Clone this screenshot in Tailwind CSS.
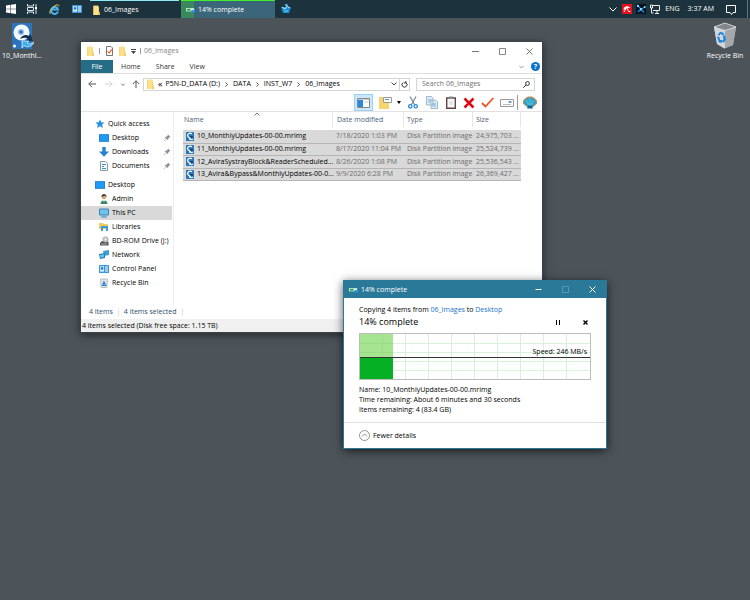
<!DOCTYPE html>
<html lang="en">
<head>
  <meta charset="UTF-8" />
  <meta name="viewport" content="width=device-width, initial-scale=1.0" />
  <title>Desktop</title>
  <script src="https://cdn.jsdelivr.net/npm/@tailwindcss/browser@4"></script>
</head>
<body class="relative min-h-screen overflow-hidden bg-[#4c545a] font-['Open_Sans','Noto_Sans',sans-serif] text-[7px] leading-[10px] text-black">

  <!-- Shared icons -->
  <svg class="hidden">
    <symbol id="folder" viewBox="0 0 10 12">
      <path d="M1 1h6l1 2v9H1z" fill="#f5d068" /><path d="M2 1h5v9l2 1v1H2z" fill="#ffe08a" /><path d="M7 8h2v4H7z" fill="#f3ca5c" />
    </symbol>
    <symbol id="disk" viewBox="0 0 8 9">
      <rect width="8" height="9" rx=".5" fill="#2b77b9" /><path d="M6 1.800C3.500.3 1.500 2 1.700 3.800 1.900 5.500 3.500 6 4.500 5.600" fill="none" stroke="#fff" stroke-width="1.300" />
      <path d="M3.500 5.200C5 3.500 6.500 4 7.500 5.200L6 6z" fill="#173e66" /><path d="M7.500 7C6.500 8.800 4.500 8.600 3.700 7.500L3 8.300V5.900h2.500l-.8.800c.8.600 1.500.4 2-.2z" fill="#dff3ff" />
    </symbol>
    <symbol id="monitor" viewBox="0 0 12 9">
      <rect x=".5" y=".5" width="11" height="8" fill="#1e9bf5" stroke="#1878c8" />
    </symbol>
    <symbol id="pin" viewBox="0 0 8 8">
      <path d="M5 .5 7.500 3l-1 .3-1.300 1.400-.2 1.600-1.500-1.500L1 7.300l-.3-.3 2.300-2.600L1.600 3l1.700-.2L4.700 1.500z" fill="#8b9299" />
    </symbol>
    <symbol id="panel" viewBox="0 0 10 8">
      <rect width="10" height="8" rx=".5" fill="#3b94d8" /><rect x="1" y="1.200" width="4" height="5.500" fill="#cdeafc" /><circle cx="3" cy="3.400" r="1.300" fill="#2b7fc5" /><path d="M6 2h3M6 4h3M6 6h3" stroke="#fff" />
    </symbol>
    <symbol id="bin" viewBox="0 0 24 27">
      <path d="M1 5 12 1l11 4-3 18-9 3.500L4 22z" fill="#b9bdc0" /><path d="m1 5 11 3.500V26.500L4 22z" fill="#d3d6d8" /><path d="m12 8.500 11-3.500-3 18-8 3.500z" fill="#a4a8ab" /><path d="m1 5 11-4 11 4-11 3.500z" fill="#82878a" stroke="#dfe2e3" stroke-width=".8" />
      <path d="m4.500 13 2.500-3 3 .5 1.500 2.500-2 .5-1.500-2-1.500 2zM4 14.500l2.500.5.5 3h2v2.500H6zM10 14l2-.5 1 4-2.500 3.500-1.500-2 1.500-1.500z" fill="#1784df" />
    </symbol>
    <symbol id="transfer" viewBox="0 0 10 6">
      <path d="M0 1h9v3.500H0z" fill="#e7eef0" /><path d="M1 1.800h4v2H1z" fill="#13b32b" /><path d="M6 3h4v2.500H6z" fill="#2a98e8" />
    </symbol>
  </svg>

  <!-- Taskbar -->
  <header class="flex h-[18px] items-center bg-[#1c323d] text-white">
    <button class="flex w-[21px] justify-center" aria-label="Start">
      <svg class="size-[10px]" viewBox="0 0 10 10" fill="#fff"><path d="M0 1.400 4.500.8v3.900H0zM5 .7 10 0v4.700H5zM0 5.200h4.500v4L0 8.600zM5 5.200h5V10l-5-.7z" /></svg>
    </button>
    <button class="flex w-[22px] justify-center" aria-label="Task view">
      <svg class="size-[10px]" viewBox="0 0 10 10" fill="none" stroke="#dfe7ea"><path d="M.5 0v2h6V0M.5 10V8h6v2M.5 3.500h6v3h-6zM9 0v10" /><path d="M8 3h2v2H8z" fill="#fff" stroke="none" /></svg>
    </button>
    <button class="flex w-[23px] justify-center" aria-label="Internet Explorer">
      <svg class="size-[11px]" viewBox="0 0 11 11" fill="none"><path d="M9 7.500A3.500 3.500 0 1 1 9 5.500H3" stroke="#42b5f2" stroke-width="1.900" /><path d="M1.300 9.800C-.5 8 3 3 7 1.200c2-.9 3.200-.4 2.700 1.300" stroke="#f6c73c" /></svg>
    </button>
    <button class="flex w-[21px] justify-center" aria-label="Control Panel"><svg class="h-[8px] w-[10px]"><use href="#panel" /></svg></button>
    <button class="ml-[3px] flex h-full w-[89px] items-center gap-[3px] border-t border-t-[#8eeaf5] pl-[2px]">
      <svg class="h-[10px] w-[9px]"><use href="#folder" /></svg>06_Images
    </button>
    <button class="ml-[2px] flex h-full w-[94px] items-center gap-[3px] border-t border-t-[#45ee2d] bg-linear-to-r from-[#3a895e] from-14% to-[#3b6679] to-14% pl-[5px]">
      <svg class="h-[6px] w-[9px]"><use href="#transfer" /></svg>14% complete
    </button>
    <button class="ml-[6px]" aria-label="Backup tool">
      <svg class="size-[10px]" viewBox="0 0 10 10"><path d="M0 3h10L8 9H2z" fill="#1c8fd5" /><path d="m1 3 3 2 2-3 3 2" stroke="#bde8fa" fill="none" /><path d="m4 1 2-1v2zM3 7h4" stroke="#68c6f3" /></svg>
    </button>
    <div class="ml-auto flex h-full items-center">
      <button class="mr-[5px]" aria-label="Show hidden icons"><svg class="h-[5px] w-[8px]" viewBox="0 0 8 5" fill="none" stroke="#fff"><path d="m.5.5 3.500 3.500L7.500.5" /></svg></button>
      <button class="mr-[4px]" aria-label="Avira"><svg class="size-[10px]" viewBox="0 0 10 10"><path d="M0 0h10v10H0z" fill="#e8101b" /><path d="M1.500 6C1.500 2.500 5.500.8 8.500 4L5.500 4 3.500 5z" fill="#fff" /><path d="M5 3.500 6.500 7.500H8.500M4 4.500 2 8" fill="none" stroke="#fff" stroke-width=".9" /></svg></button>
      <button class="mr-[4px]" aria-label="Tray tool"><svg class="size-[10px]" viewBox="0 0 10 10"><path d="M0 0h10v10H0z" fill="#07121f" /><path d="m1 1 4 4 4-2M5 5 2 8m3-3 3 3.500" stroke="#1f8fe0" stroke-width="1.300" /><path d="M1 1h2v2H1zM4 4h2v2H4zM8 2h1.500v2H8z" fill="#8ad3fb" /></svg></button>
      <button class="mr-[5px]" aria-label="Network"><svg class="size-[10px]" viewBox="0 0 10 10" fill="none" stroke="#fff" stroke-width=".9"><path d="M3 1.500h6.500v5H3M5 9.500h4M7 6.500v3M.5 1h2v3h-2zM1.500 4v5h2" /></svg></button>
      <span class="mr-[8px]">ENG</span>
      <span class="mr-[12px]">3:37 AM</span>
      <button class="mr-[11px]" aria-label="Notifications"><svg class="h-[11px] w-[10px]" viewBox="0 0 10 11" fill="none" stroke="#fff"><path d="M.5 1.500h9v7H7l-1.500 2L4 8.500H.5z" /></svg></button>
      <span class="h-full w-[3px] border-l border-[#66757c]"></span>
    </div>
  </header>

  <!-- Desktop icons -->
  <button class="absolute top-[22px] left-0 flex w-[44px] flex-col items-center gap-[2px] text-white">
    <svg class="h-[27px] w-[24px]" viewBox="0 0 24 27">
      <path d="M2 1h20v26H2z" fill="#2d75ba" /><circle cx="11.500" cy="10.500" r="8" fill="#f2f7fb" /><circle cx="11" cy="10" r="3" fill="#8fbde2" /><circle cx="11" cy="10" r="1.500" fill="#2068ab" /><circle cx="4.500" cy="24" r="1.500" fill="#fff" />
      <path d="M10 17c2-4 6-5 9-3l2-1.500 1.500 6.500H16l2-2c-2-2-5-1.500-8 0z" fill="#12304d" /><path d="M24 20c-2 5-7 6-10 3.500L12 26v-7h7l-2 2c2 1.500 4 1 7-1z" fill="#38b0f2" stroke="#eaf8ff" stroke-width=".7" />
    </svg>
    10_Monthl...
  </button>
  <button class="absolute top-[22px] right-[3px] flex w-[44px] flex-col items-center gap-[2px] whitespace-nowrap text-white">
    <svg class="h-[27px] w-[24px]"><use href="#bin" /></svg>
    Recycle Bin
  </button>

  <!-- Explorer window -->
  <main class="absolute top-[41px] left-[80px] w-[463px] border border-[#3c4448] bg-white shadow-[0_2px_8px_#0008]">
    <div class="flex h-[18px] items-center pl-[5px] text-[#858585]">
      <svg class="h-[10px] w-[9px]"><use href="#folder" /></svg>
      <span class="mr-[6px] ml-[4px] h-[6px] border-l border-[#999]"></span>
      <svg class="h-[10px] w-[7px]" viewBox="0 0 7 10" fill="none"><path d="M.5.500h4.500l1.500 1.500v7.500h-6z" stroke="#777" /><path d="m1.500 5 1.500 2L6 3.500" stroke="#e86f31" stroke-width="1.200" /></svg>
      <svg class="ml-[5px] h-[10px] w-[9px]"><use href="#folder" /></svg>
      <svg class="ml-[4px] h-[5px] w-[5px]" viewBox="0 0 5 5"><path d="M0 0h5v1H0zM0 2h5L2.500 5z" fill="#444" /></svg>
      <span class="mr-[3px] ml-[4px] h-[6px] border-l border-[#999]"></span>
      06_Images
      <div class="ml-auto flex items-center gap-[20px] pr-[9px]">
        <button aria-label="Minimize"><svg class="size-[7px]" viewBox="0 0 7 7" stroke="#777"><path d="M0 3.500h7" /></svg></button>
        <button aria-label="Maximize"><svg class="size-[7px]" viewBox="0 0 7 7" fill="none" stroke="#888"><path d="M.5.500h6v6h-6z" /></svg></button>
        <button aria-label="Close"><svg class="size-[7px]" viewBox="0 0 7 7" stroke="#777"><path d="m.5.500 6 6m0-6-6 6" /></svg></button>
      </div>
    </div>

    <nav class="flex h-[14px] items-center border-b border-[#dedede] text-[#333]">
      <button class="h-full w-[32px] bg-[#256d86] text-white">File</button>
      <button class="ml-[8px]">Home</button>
      <button class="ml-[15px]">Share</button>
      <button class="ml-[15px]">View</button>
      <button class="mr-[7px] ml-auto" aria-label="Expand ribbon"><svg class="h-[4px] w-[5px]" viewBox="0 0 5 4" fill="none" stroke="#999"><path d="m0 .5 2.500 2.500L5 .5" /></svg></button>
      <button class="mr-[2px] flex size-[9px] items-center justify-center rounded-full bg-[#0873cc] font-bold text-white" aria-label="Help">?</button>
    </nav>

    <div class="flex h-[20px] items-center pr-[7px]">
      <button class="ml-[7px]" aria-label="Back"><svg class="size-[8px]" viewBox="0 0 8 8" fill="none" stroke="#555"><path d="M8 4H.8M4 .8.800 4 4 7.200" /></svg></button>
      <button class="ml-[9px]" aria-label="Forward"><svg class="size-[8px]" viewBox="0 0 8 8" fill="none" stroke="#d3d3d3"><path d="M0 4h7.200M4 .8 7.200 4 4 7.200" /></svg></button>
      <button class="ml-[8px]" aria-label="Recent locations"><svg class="h-[3px] w-[4px]" viewBox="0 0 4 3" fill="none" stroke="#777"><path d="m0 .5 2 2 2-2" /></svg></button>
      <button class="ml-[7px]" aria-label="Up"><svg class="size-[8px]" viewBox="0 0 8 8" fill="none" stroke="#555"><path d="M4 8V.8M.8 4 4 .8 7.200 4" /></svg></button>
      <div class="ml-[3px] flex h-[13px] flex-1 items-center border border-[#d4d4d4] pl-[2px]">
        <svg class="h-[10px] w-[9px]"><use href="#folder" /></svg>
        <span class="mx-[3px] text-[9px]">«</span>
        <a href="#" class="whitespace-nowrap">P5N-D_DATA (D:)</a>
        <svg class="mx-[5px] h-[5px] w-[3px]" viewBox="0 0 3 5" fill="none" stroke="#555"><path d="m.5.500 2 2-2 2" /></svg>
        <a href="#">DATA</a>
        <svg class="mx-[5px] h-[5px] w-[3px]" viewBox="0 0 3 5" fill="none" stroke="#555"><path d="m.5.500 2 2-2 2" /></svg>
        <a href="#">INST_W7</a>
        <svg class="mx-[5px] h-[5px] w-[3px]" viewBox="0 0 3 5" fill="none" stroke="#555"><path d="m.5.500 2 2-2 2" /></svg>
        <a href="#">06_Images</a>
        <button class="mr-[2px] ml-auto" aria-label="Address history"><svg class="h-[4px] w-[6px]" viewBox="0 0 6 4" fill="none" stroke="#444"><path d="m.5.500 2.500 2.500L5.500.5" /></svg></button>
        <button class="flex h-full w-[10px] items-center justify-center border-l border-[#d4d4d4]" aria-label="Refresh"><svg class="size-[7px]" viewBox="0 0 7 7" fill="none" stroke="#333"><path d="M4.800 1.500a2.500 2.500 0 1 1-2.600 0M4.800 0v2H3" /></svg></button>
      </div>
      <label class="ml-[6px] flex h-[13px] w-[119px] items-center border border-[#d4d4d4] pr-[4px] pl-[5px]">
        <input type="text" aria-label="Search" placeholder="Search 06_Images" class="min-w-0 flex-1 placeholder:text-[#707070]" />
        <svg class="size-[7px]" viewBox="0 0 7 7" fill="none" stroke="#333"><circle cx="4.500" cy="2.500" r="1.900" /><path d="M3 4 .3 6.700" /></svg>
      </label>
    </div>

    <!-- Toolbar -->
    <div class="flex h-[18px] items-center justify-end border-b border-[#e2e2e2] pr-[5px]">
      <button class="flex h-[17px] w-[19px] items-center justify-center border border-[#99d1ff] bg-[#cce8ff]" aria-label="Navigation pane"><svg class="h-[10px] w-[13px]" viewBox="0 0 13 10"><path d="M.5.500h12v9H.5z" fill="#fff" stroke="#898989" /><path d="M1 2h5v7H1z" fill="#2689db" /><path d="M1 1.500h11M7 4h5" stroke="#c5cfd5" /></svg></button>
      <button class="ml-[6px]" aria-label="Layout"><svg class="h-[13px] w-[13px]" viewBox="0 0 13 13"><path d="M0 1h4l1 2h5v10H0z" fill="#f7d46b" /><path d="M4.500 1.500h8v5h-8z" fill="#fff" stroke="#999" /><path d="M6 3.500h4" stroke="#5597d0" /></svg></button>
      <button class="ml-[5px]" aria-label="Layout options"><svg class="h-[3px] w-[4px]" viewBox="0 0 4 3"><path d="M0 0h4L2 3z" /></svg></button>
      <button class="ml-[7px]" aria-label="Cut"><svg class="h-[13px] w-[10px]" viewBox="0 0 10 13" fill="none"><path d="m2 .5 4.500 8M8 .5 3.500 8.500" stroke="#75899a" stroke-width="1.200" /><circle cx="2.300" cy="10.300" r="1.700" stroke="#1b83d0" stroke-width="1.200" /><circle cx="7.700" cy="10.300" r="1.700" stroke="#1b83d0" stroke-width="1.200" /></svg></button>
      <button class="ml-[8px]" aria-label="Copy"><svg class="h-[13px] w-[12px]" viewBox="0 0 12 13" fill="#dcecf8" stroke="#91a9bb" stroke-width=".8"><path d="M.5.500h5l1.500 2v6.500H.5zM5 4h4.500l2 2v6.500H5z" /><path d="M2 4h3M2 6h2M6.500 8H10M6.500 10H10" stroke="#5da3d6" /></svg></button>
      <button class="ml-[8px]" aria-label="Paste"><svg class="h-[13px] w-[10px]" viewBox="0 0 10 13"><path d="M.7 2h8.600v10.300H.7z" fill="#f7f9fa" stroke="#65453d" stroke-width="1.400" /><path d="M3 .5h4v2.500H3z" fill="#888" /><path d="M3 6h4M3 8h4" stroke="#cdd5da" /></svg></button>
      <button class="ml-[7px]" aria-label="Delete"><svg class="size-[12px]" viewBox="0 0 12 12" stroke="#d90b14" stroke-width="2.500"><path d="m1.500 1.500 9 9m0-9-9 9" /></svg></button>
      <button class="ml-[6px]" aria-label="Properties"><svg class="h-[11px] w-[13px]" viewBox="0 0 13 11" fill="none" stroke="#ed5421" stroke-width="1.800"><path d="m1 6 3.500 3.500L12.300 1" /></svg></button>
      <button class="ml-[6px]" aria-label="Rename"><svg class="h-[8px] w-[14px]" viewBox="0 0 14 8" fill="#fff" stroke="#999"><path d="M.5.500h13v7H.5z" /><path d="M3 5.500h8" stroke="#bbb" /><path d="M8.500 3h3" stroke="#397fb9" stroke-width="1.500" /></svg></button>
      <span class="ml-[3px] h-[15px] border-l border-[#999]"></span>
      <button class="ml-[5px]" aria-label="Classic Shell"><svg class="h-[13px] w-[14px]" viewBox="0 0 14 13"><path d="M3 10.500 0 7.500V4.500L2.500 2 5 .5h4L11.500 2 14 4.500v3l-3 3z" fill="#d9834a" /><path d="M4 10.500 1 7V5l2.500-2.500L6 1.500h2l2.500 1L13 5v2l-3 3.500z" fill="#2ea6c8" /><path d="M4 12.500 5 9.500h4l1 3z" fill="#17669a" /><path d="M7 9.500V2.500M6 9 3.500 4.500M8 9l2.500-4.500" stroke="#7fdbe6" stroke-width=".6" /></svg></button>
    </div>

    <!-- Navigation pane and file list -->
    <div class="flex h-[193px]">
      <aside class="w-[93px] border-r border-[#eeeeee] pt-[5px] [&_a]:flex [&_a]:h-[14px] [&_a]:items-center [&_a]:gap-[3px] [&_a]:whitespace-nowrap [&_a]:pl-[18px] [&_svg]:size-[10px]">
        <a href="#" class="mr-[1px] -ml-[4px]"><svg viewBox="0 0 10 10"><path d="m5 .5 1.300 2.800 3.200.3-2.400 2 .9 3.300L5 7.300 2 9l.8-3.300L.5 3.600l3.200-.3z" fill="#2c91dc" /></svg>Quick access</a>
        <a href="#"><svg><use href="#monitor" /></svg>Desktop<svg class="mr-[1px] ml-auto p-[1px]"><use href="#pin" /></svg></a>
        <a href="#"><svg viewBox="0 0 10 10"><path d="M3.300 0h3.400v4.500H10L5 9.800 0 4.500h3.300z" fill="#2383d0" /></svg>Downloads<svg class="mr-[1px] ml-auto p-[1px]"><use href="#pin" /></svg></a>
        <a href="#"><svg viewBox="0 0 10 10"><path d="M1.500.500h5l2 2v7h-7z" fill="#f6fafc" stroke="#8a9aa5" /><path d="M3 3.500h4M3 5.500h2M3 7.500h4" stroke="#3b91cc" /></svg>Documents<svg class="mr-[1px] ml-auto p-[1px]"><use href="#pin" /></svg></a>
        <div class="h-[5px]"></div>
        <a href="#" class="-ml-[4px]"><svg><use href="#monitor" /></svg>Desktop</a>
        <a href="#"><svg viewBox="0 0 10 10"><circle cx="5" cy="3" r="2.300" fill="#d9a37b" /><path d="M2.500 3c-.5-4 5.500-4 5 0L6 1.500z" fill="#3f342c" /><path d="M1.500 10c0-5 7-5 7 0z" fill="#3b8b65" /><path d="m4 6 1 2 1-2z" fill="#fff" /></svg>Admin</a>
        <a href="#" class="mr-[1px] bg-[#d9d9d9]"><svg viewBox="0 0 10 10"><path d="M.5 1h9v6h-9z" fill="#6dc3f0" stroke="#4785ac" /><path d="M2 9h6M5 7v2" stroke="#3c93cb" /></svg>This PC</a>
        <a href="#"><svg viewBox="0 0 10 10"><path d="M0 1h4l1 1h4v5H0z" fill="#f4cc5b" /><path d="M2 9V4h7v5H7V6H4v3z" fill="#3a9ce0" /></svg>Libraries</a>
        <a href="#"><svg viewBox="0 0 10 10"><path d="m1 7 2-2h6l.5 2v2.500H1z" fill="#555" /><circle cx="6.500" cy="3.500" r="2.800" fill="#c5c9cb" stroke="#9a9a9a" stroke-width=".5" /><circle cx="6.500" cy="3.500" r=".8" fill="#fff" /><path d="M2 8h6" stroke="#ccc" stroke-width=".7" /></svg>BD-ROM Drive (J:)</a>
        <a href="#"><svg viewBox="0 0 10 10"><path d="m4 1 6-1v5L5 6z" fill="#3e9dd4" /><path d="m0 4 6-1v5L1 9z" fill="#267fb5" /><path d="m1 5 4-.8V7l-3.500.8z" fill="#65c4ee" /></svg>Network</a>
        <a href="#"><svg><use href="#panel" /></svg>Control Panel</a>
        <a href="#"><svg viewBox="0 0 10 10"><path d="M1.500 1h7l-.7 8.500H2.200z" fill="#e3e8eb" stroke="#a9b1b6" stroke-width=".8" /><path d="M3.500 7.500 5 4l1.700 3.500z" fill="none" stroke="#1f7fd2" stroke-width="1.200" /></svg>Recycle Bin</a>
      </aside>

      <section class="relative flex-1 pl-[9px]">
        <svg class="absolute top-0 left-[80px] h-[4px] w-[6px]" viewBox="0 0 6 4" fill="none" stroke="#777"><path d="m.5 3.500 2.500-2.500 2.500 2.500" /></svg>
        <table class="w-[338px] table-fixed whitespace-nowrap text-left">
          <colgroup><col class="w-[150px]" /><col class="w-[71px]" /><col class="w-[69px]" /><col class="w-[48px]" /></colgroup>
          <thead class="text-[#4c607a] [&_span]:block [&_span]:h-[15px] [&_span]:border-r [&_span]:border-[#e5e5e5] [&_span]:leading-[15px] [&_th]:h-[18px] [&_th]:align-top [&_th]:font-normal">
            <tr><th><span class="pl-[1px]">Name</span></th><th><span class="pl-[4px]">Date modified</span></th><th><span class="pl-[3px]">Type</span></th><th><span class="pl-[3px]">Size</span></th></tr>
          </thead>
          <tbody class="bg-[#d9d9d9] text-[#6d6d6d] [&_div]:flex [&_div]:items-center [&_div]:gap-[3px] [&_div]:pl-[3px] [&_div]:text-black [&_svg]:h-[9px] [&_svg]:w-[8px] [&_svg]:shrink-0 [&_td]:h-[13px] [&_td+td]:pl-[3px] [&_tr]:border-b [&_tr]:border-[#b5b5b5] [&_tr:nth-child(even)_td]:h-[12px]">
            <tr><td><div><svg><use href="#disk" /></svg>10_MonthlyUpdates-00-00.mrimg</div></td><td>7/18/2020 1:03 PM</td><td>Disk Partition image</td><td>24,975,703 ...</td></tr>
            <tr><td><div><svg><use href="#disk" /></svg>11_MonthlyUpdates-00-00.mrimg</div></td><td>8/17/2020 11:04 PM</td><td>Disk Partition image</td><td>25,524,739 ...</td></tr>
            <tr><td><div><svg><use href="#disk" /></svg>12_AviraSystrayBlock&amp;ReaderScheduled...</div></td><td>8/26/2020 1:08 PM</td><td>Disk Partition image</td><td>25,536,543 ...</td></tr>
            <tr><td><div><svg><use href="#disk" /></svg>13_Avira&amp;Bypass&amp;MonthlyUpdates-00-0...</div></td><td>9/9/2020 6:28 PM</td><td>Disk Partition image</td><td>26,369,427 ...</td></tr>
          </tbody>
        </table>
      </section>
    </div>
    <div class="flex h-[14px] items-center pl-[8px] text-[#2a5070]">
      4 items<span class="mx-[5px] h-[8px] border-l border-[#e5e5e5]"></span>4 items selected<span class="mx-[5px] h-[8px] border-l border-[#e5e5e5]"></span>
    </div>
    <footer class="h-[13px] bg-[#f0f0f0] pl-[1px] leading-[13px]">4 items selected (Disk free space: 1.15 TB)</footer>
  </main>

  <!-- Copy progress -->
  <section class="absolute top-[280px] left-[343px] w-[264px] border border-[#2b7998] bg-white shadow-[0_2px_9px_#000a]">
    <div class="flex h-[17px] items-center bg-[#2b7998] pr-[10px] pl-[5px] text-white">
      <svg class="mr-[3px] h-[6px] w-[9px]"><use href="#transfer" /></svg>14% complete
      <div class="ml-auto flex items-center gap-[20px]">
        <button aria-label="Minimize"><svg class="size-[7px]" viewBox="0 0 7 7" stroke="#fff"><path d="M.5 3.500h6" /></svg></button>
        <button disabled aria-label="Maximize"><svg class="size-[7px]" viewBox="0 0 7 7" fill="none" stroke="#5598b1"><path d="M.5.500h6v6h-6z" /></svg></button>
        <button aria-label="Close"><svg class="size-[7px]" viewBox="0 0 7 7" stroke="#fff"><path d="m.5.500 6 6m0-6-6 6" /></svg></button>
      </div>
    </div>
    <div class="px-[15px] pt-[7px]">
      <p>Copying 4 items from <a href="#" class="text-[#1873c8]">06_Images</a> to <a href="#" class="text-[#1873c8]">Desktop</a></p>
      <div class="flex h-[14px] items-center">
        <h1 class="text-[9px]">14% complete</h1>
        <button class="mr-[23px] ml-auto" aria-label="Pause"><svg class="h-[5px] w-[4px]" viewBox="0 0 4 5"><path d="M0 0h1v5H0zM3 0h1v5H3z" /></svg></button>
        <button class="mr-[3px]" aria-label="Cancel"><svg class="size-[5px]" viewBox="0 0 5 5" stroke="#000" stroke-width="1.400"><path d="m.5.500 4 4m0-4-4 4" /></svg></button>
      </div>
      <div class="relative mt-[4px] h-[47px] border border-[#bcbcbc]">
        <svg class="absolute inset-0 size-full" viewBox="0 0 230 45" preserveAspectRatio="none">
          <path d="M22.500 0v45M45.500 0v45M68.500 0v45M91.500 0v45M114.500 0v45M137.500 0v45M160.500 0v45M183.500 0v45M206.500 0v45M0 9.500h230M0 18.500h230M0 27.500h230M0 36.500h230" stroke="#d8f1da" />
          <path d="M0 0h33v24H0z" fill="#a6e491" /><path d="M22.500 0v24M0 9.500h33M0 18.500h33" stroke="#98dc83" /><path d="M0 24h33v21H0z" fill="#06b025" /><path d="M0 23.500h230" stroke="#333" />
        </svg>
        <span class="absolute right-[3px] bottom-[22px]">Speed: 246 MB/s</span>
      </div>
      <dl class="mt-[5px] [&_dd]:inline [&_dt]:inline">
        <div><dt>Name:</dt> <dd>10_MonthlyUpdates-00-00.mrimg</dd></div>
        <div><dt>Time remaining:</dt> <dd>About 6 minutes and 30 seconds</dd></div>
        <div><dt>Items remaining:</dt> <dd>4 (83.4 GB)</dd></div>
      </dl>
    </div>
    <div class="mt-[7px] flex h-[26px] items-center border-t border-[#dfdfdf] px-[15px]">
      <button class="flex items-center gap-[3px]"><svg class="size-[11px]" viewBox="0 0 11 11" fill="none" stroke="#777" stroke-width=".8"><circle cx="5.500" cy="5.500" r="5" /><path d="m3 6.500 2.500-2.500L8 6.500" /></svg>Fewer details</button>
    </div>
  </section>

</body>
</html>
